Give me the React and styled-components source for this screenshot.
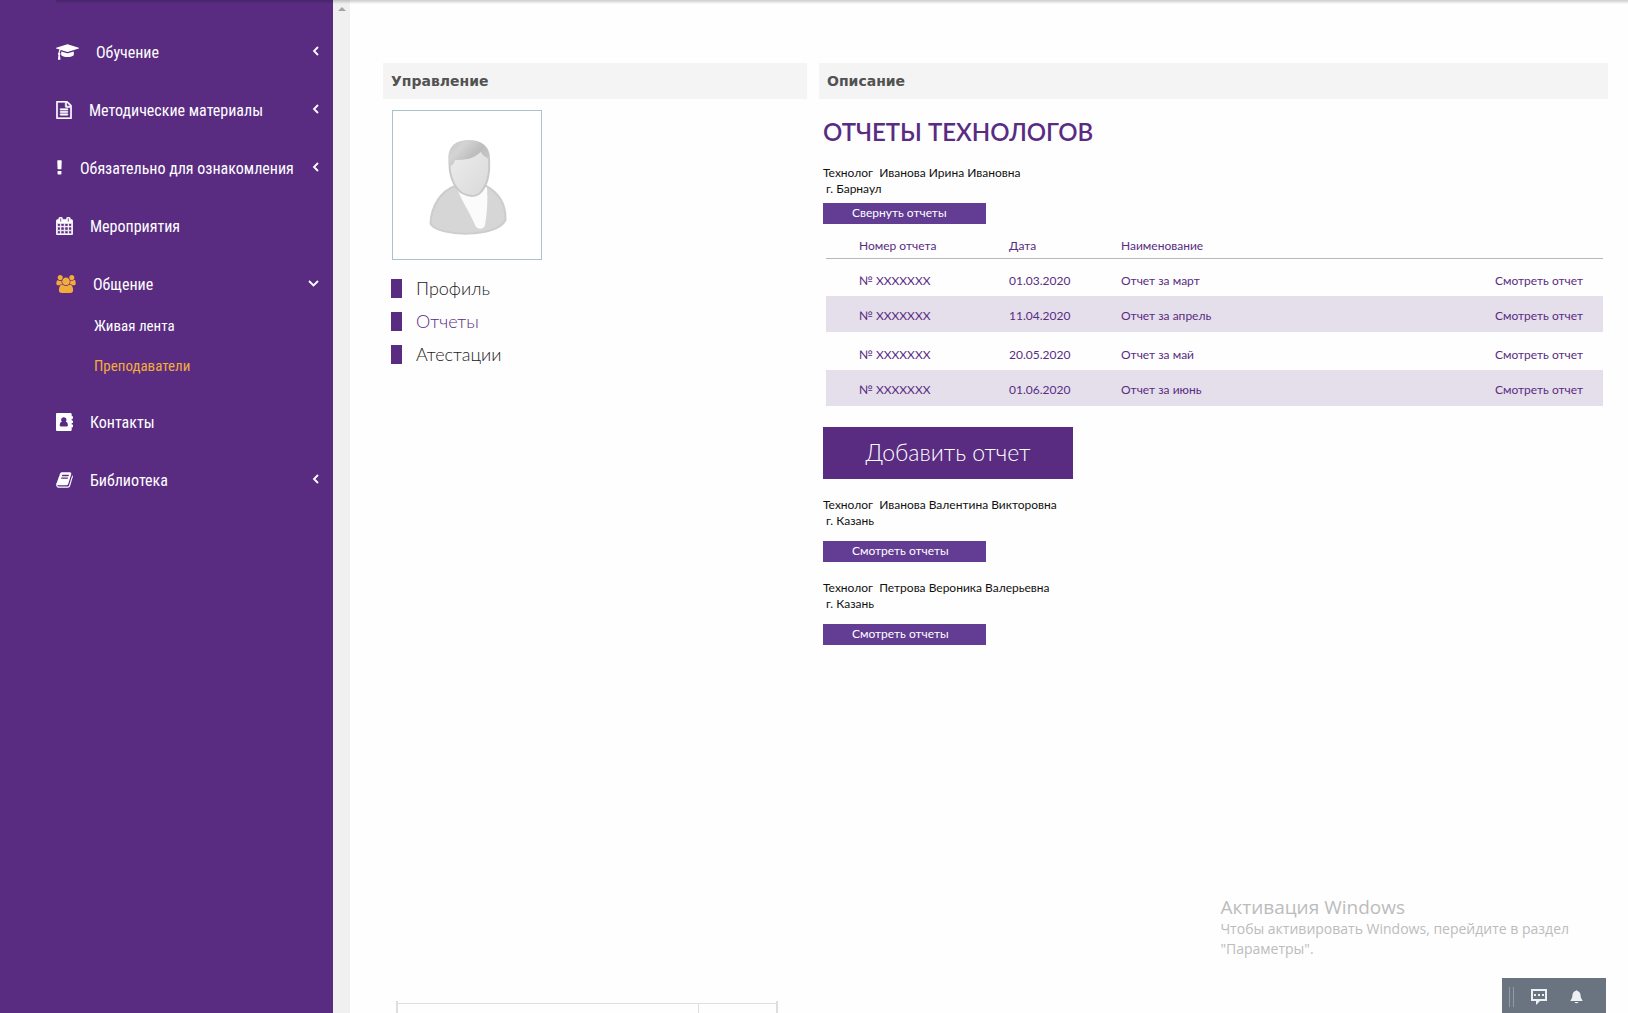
import React from "react";
import styled, { createGlobalStyle } from "styled-components";

const purple = "#592c82";
const purpleLight = "#633c94";
const amber = "#f3ac3c";
const textFont = `Lato, "Open Sans", sans-serif`;

const GlobalStyle = createGlobalStyle`
  *, *::before, *::after { box-sizing: border-box; }
  body { margin: 0; background: #fefefe; font-family: ${textFont}; }
  ul { list-style: none; margin: 0; padding: 0; }
  h1, h2, p { margin: 0; }
  a { color: inherit; text-decoration: none; }
  button { border: 0; padding: 0; margin: 0; font: inherit; color: inherit; background: none; cursor: pointer; }
`;

const Page = styled.div`
  position: relative;
  display: flex;
  min-height: 100vh;
`;

const TopShadow = styled.div`
  position: absolute;
  top: 0;
  left: 56px;
  right: 0;
  height: 4px;
  background: linear-gradient(rgba(0, 0, 0, 0.2), rgba(0, 0, 0, 0));
`;

const Sidebar = styled.nav`
  flex: 0 0 333px;
  min-width: 0;
  padding: 36px 13px 36px 56px;
  background: ${purple};
  color: #fff;
  font-family: "Roboto Condensed", "Liberation Sans Narrow", Roboto, sans-serif;
`;

const MenuList = styled.ul`
  display: flex;
  flex-direction: column;
  gap: 26px;
`;

const MenuButton = styled.button`
  display: flex;
  align-items: center;
  gap: 17px;
  width: 100%;
  height: 32px;
  font-size: 16px;
  line-height: 20px;
  text-align: left;
  white-space: nowrap;
`;

const MenuIcon = styled.svg`
  flex: none;
  height: 18px;
  fill: ${(p) => (p.$active ? amber : "#fff")};
  stroke: #fff;
  stroke-width: ${(p) => (p.$outlined ? 60 : 0)};
`;

const MenuLabel = styled.span`
  flex: 1;
  min-width: 0;
  padding-top: 2px;
`;

const Arrow = styled.svg`
  flex: none;
  fill: none;
  stroke: #fff;
  stroke-width: 1.8;
`;

const SubList = styled.ul`
  display: flex;
  flex-direction: column;
  gap: 12px;
  padding: 12px 0 0 38px;
`;

const SubLink = styled.a`
  display: block;
  font-size: 15px;
  line-height: 28px;
  color: ${(p) => (p.$active ? amber : "#fff")};
`;

const ScrollTrack = styled.div`
  flex: 0 0 17px;
  display: flex;
  justify-content: center;
  padding-top: 7px;
  background: #f0f0f0;
`;

const ScrollArrow = styled.div`
  width: 0;
  height: 0;
  border: 4px solid transparent;
  border-top: 0;
  border-bottom-color: #a3a3a3;
`;

const Main = styled.main`
  flex: 1;
  display: grid;
  grid-template-columns: 424fr 789fr;
  gap: 12px;
  padding: 63px 20px 0 33px;
`;

const Column = styled.section`
  display: flex;
  flex-direction: column;
  align-items: flex-start;
  min-width: 0;
`;

const ColumnTitle = styled.h2`
  align-self: stretch;
  padding: 0 8px;
  background: #f4f4f4;
  color: #525252;
  font: bold 14px/36px "DejaVu Sans", sans-serif;
`;

const AvatarFrame = styled.div`
  margin: 11px 0 0 9px;
  width: 150px;
  height: 150px;
  border: 1px solid #a9c2cd;
  background: #fff;
`;

const ProfileMenu = styled.ul`
  display: flex;
  flex-direction: column;
  gap: 9px;
  padding: 16px 8px;
`;

const ProfileLink = styled.a`
  display: flex;
  align-items: center;
  gap: 14px;
  font-size: 18px;
  line-height: 24px;
  font-weight: 300;
  color: ${(p) => (p.$active ? purple : "#222")};

  &::before {
    content: "";
    width: 11px;
    height: 19px;
    background: ${purple};
  }
`;

const NextTable = styled.div`
  align-self: stretch;
  display: flex;
  height: 12px;
  margin: auto 29px 0 13px;
  border: solid #dedede;
  border-width: 0 2px;
`;

const NextCell = styled.div`
  flex: ${(p) => p.$grow};
  margin-top: 2px;
  border-top: 1px solid #dedede;
  & + & { border-left: 1px solid #dedede; }
`;

const Content = styled.div`
  align-self: stretch;
  display: flex;
  flex-direction: column;
  align-items: flex-start;
  padding: 18px 5px 0 4px;
`;

const Heading = styled.h1`
  color: ${purple};
  font-size: 24px;
  line-height: 30px;
  font-weight: 600;
`;

const Person = styled.p`
  margin-top: ${(p) => p.$top}px;
  color: #111;
  font-size: 12px;
  line-height: 16px;
  white-space: pre;
`;

const ToggleButton = styled.button`
  width: 163px;
  height: 21px;
  margin-top: ${(p) => p.$top}px;
  padding: 0 0 2px 29px;
  background: ${purpleLight};
  color: #fff;
  font-size: 12px;
  line-height: 18px;
  text-align: left;
`;

const ReportTable = styled.table`
  align-self: stretch;
  margin: 8px 0 0 3px;
  border-collapse: collapse;
  table-layout: fixed;
  color: ${purple};
  font-size: 12px;
  line-height: 16px;
  text-align: left;

  th { height: 26px; padding: 2px 0 0; border-bottom: 1px solid #b9b9b9; font-weight: 400; }
  td { height: 38px; padding: 8px 0 0; }
  tbody tr:nth-child(even) { background: #e5dfeb; }
  tbody tr:nth-child(even) td { height: 36px; padding-top: 3px; }
  th:first-child, td:first-child { width: 183px; padding-left: 33px; }
  th:nth-child(2) { width: 112px; }
  td:last-child { padding-right: 20px; text-align: right; }
`;

const AddButton = styled.button`
  width: 250px;
  height: 52px;
  margin-top: 21px;
  padding-bottom: 3px;
  background: ${purple};
  color: #fff;
  font-size: 23px;
  font-weight: 300;
`;

const Activation = styled.aside`
  position: absolute;
  right: 59px;
  bottom: 54px;
  color: #bcbcbc;
  font: 14px/20px "Open Sans", "Noto Sans", sans-serif;
`;

const ActivationTitle = styled.p`
  font-size: 19px;
  line-height: 24px;
`;

const Dock = styled.div`
  position: absolute;
  right: 22px;
  bottom: 0;
  display: flex;
  align-items: center;
  width: 104px;
  height: 35px;
  padding: 3px 0 0 7px;
  background: #6a7380;
`;

const Grip = styled.span`
  width: 5px;
  height: 20px;
  margin-right: 17px;
  border: solid #949ba5;
  border-width: 0 1px;
`;

const DockButton = styled.button`
  display: flex;
  margin-right: 23px;
`;

const icons = {
  cap: {
    box: "0 0 2304 1792",
    w: 23,
    d: "M1774 836l18 316q4 69-82 128t-235 93.5-323 34.5-323-34.5-235-93.5-82-128l18-316 574 181q22 7 48 7t48-7zm530-324q0 23-22 31l-1120 352q-4 1-10 1t-10-1l-652-206q-43 34-71 111.5t-34 178.5q63 36 63 109 0 69-58 107l58 433q2 14-8 25-9 11-24 11h-192q-15 0-24-11-10-11-8-25l58-433q-58-38-58-107 0-73 65-111 11-207 98-330l-333-104q-22-8-22-31t22-31l1120-352q4-1 10-1t10 1l1120 352q22 8 22 31z",
  },
  file: {
    box: "128 0 1536 1792",
    w: 16,
    outlined: true,
    d: "M1596 380q28 28 48 76t20 88v1152q0 40-28 68t-68 28h-1344q-40 0-68-28t-28-68v-1600q0-40 28-68t68-28h896q40 0 88 20t76 48zm-444-244v376h376q-10-29-22-41l-313-313q-12-12-41-22zm384 1528v-1024h-416q-40 0-68-28t-28-68v-416h-768v1536h1280zm-1024-864q0-14 9-23t23-9h704q14 0 23 9t9 23v64q0 14-9 23t-23 9h-704q-14 0-23-9t-9-23v-64zm736 224q14 0 23 9t9 23v64q0 14-9 23t-23 9h-704q-14 0-23-9t-9-23v-64q0-14 9-23t23-9h704zm0 256q14 0 23 9t9 23v64q0 14-9 23t-23 9h-704q-14 0-23-9t-9-23v-64q0-14 9-23t23-9h704z",
  },
  mark: {
    box: "576 0 640 1792",
    w: 7,
    d: "M1088 1248v224q0 26-19 45t-45 19h-256q-26 0-45-19t-19-45v-224q0-26 19-45t45-19h256q26 0 45 19t19 45zm30-1056l-28 768q-1 26-20.5 45t-45.5 19h-256q-26 0-45.5-19t-20.5-45l-28-768q-1-26 17.5-45t44.5-19h320q26 0 44.5 19t17.5 45z",
  },
  calendar: {
    box: "64 0 1664 1792",
    w: 17,
    outlined: true,
    d: "M192 1664h288v-288h-288v288zm352 0h320v-288h-320v288zm-352-352h288v-320h-288v320zm352 0h320v-320h-320v320zm-352-384h288v-288h-288v288zm736 736h320v-288h-320v288zm-384-736h320v-288h-320v288zm768 736h288v-288h-288v288zm-384-352h320v-320h-320v320zm-352-864v-288q0-13-9.5-22.5t-22.5-9.5h-64q-13 0-22.5 9.5t-9.5 22.5v288q0 13 9.5 22.5t22.5 9.5h64q13 0 22.5-9.5t9.5-22.5zm736 864h288v-320h-288v320zm-384-384h320v-288h-320v288zm384 0h288v-288h-288v288zm32-480v-288q0-13-9.5-22.5t-22.5-9.5h-64q-13 0-22.5 9.5t-9.5 22.5v288q0 13 9.5 22.5t22.5 9.5h64q13 0 22.5-9.5t9.5-22.5zm384-64v1280q0 52-38 90t-90 38h-1408q-52 0-90-38t-38-90v-1280q0-52 38-90t90-38h128v-96q0-66 47-113t113-47h64q66 0 113 47t47 113v96h384v-96q0-66 47-113t113-47h64q66 0 113 47t47 113v96h128q52 0 90 38t38 90z",
  },
  users: {
    box: "0 0 1920 1792",
    w: 20,
    d: "M593 896q-162 5-265 128h-134q-82 0-138-40.5t-56-118.5q0-353 124-353 6 0 43.5 21t97.5 42.5 119 21.5q67 0 133-23-5 37-5 66 0 159 81 293zm1071 637q0 120-73 189.5t-194 69.5h-874q-121 0-194-69.5t-73-189.5q0-53 3.5-103.5t14-109 26.5-108.5 43-97.5 62-81 85.5-53.5 111.5-20q10 0 43 21.5t73 48 107 48 135 21.5 135-21.5 107-48 73-48 43-21.5q61 0 111.5 20t85.5 53.5 62 81 43 97.5 26.5 108.5 14 109 3.5 103.5zm-1024-1277q0 106-75 181t-181 75-181-75-75-181 75-181 181-75 181 75 75 181zm704 384q0 159-112.5 271.5t-271.5 112.5-271.5-112.5-112.5-271.5 112.5-271.5 271.5-112.5 271.5 112.5 112.5 271.5zm576 225q0 78-56 118.5t-138 40.5h-134q-103-123-265-128 81-134 81-293 0-29-5-66 66 23 133 23 59 0 119-21.5t97.5-42.5 43.5-21q124 0 124 353zm-128-609q0 106-75 181t-181 75-181-75-75-181 75-181 181-75 181 75 75 181z",
  },
  contacts: {
    box: "0 0 17 18",
    w: 17,
    d: "M1 0H14.500Q15.700 0 15.700 1.200V3.200H16.500Q17 3.200 17 3.700V5.300Q17 5.800 16.500 5.800H15.700V7.400H16.500Q17 7.400 17 7.900V9.500Q17 10 16.500 10H15.700V11.600H16.500Q17 11.600 17 12.100V13.700Q17 14.200 16.500 14.200H15.700V16.800Q15.700 18 14.500 18H1Q0 18 0 17V1Q0 0 1 0ZM7.800 4.200A2.600 2.600 0 0 0 5.900 8.700Q3.800 9 3.700 12.300Q3.800 13.600 5 13.600H10.600Q11.900 13.600 11.900 12.300Q11.800 9 9.700 8.700A2.600 2.600 0 0 0 7.800 4.200Z",
  },
  book: {
    box: "64 0 1664 1792",
    w: 17,
    d: "M1703 478q40 57 18 129l-275 906q-19 64-76.5 107.5t-122.5 43.5h-923q-77 0-148.5-53.5t-99.5-131.5q-24-67-2-127 0-4 3-27t4-37q1-8-3-21.5t-3-19.5q2-11 8-21t16.500-23.500 16.500-23.500q23-38 45-91.500t30-91.500q3-10 .5-30t-.5-28q3-11 17-28t17-23q21-36 42-92t25-90q1-9-2.500-32t.5-28q4-13 22-30.500t22-22.500q19-26 42.500-84.500t27.500-96.500q1-8-3-25.500t-2-26.500q2-8 9-18t18-23 17-21q8-12 16.500-30.500t15-35 16-36 19.500-32 26.500-23.500 36-11.500 47.500 5.500l-1 3q38-9 51-9h761q74 0 114 56t18 130l-274 906q-36 119-71.500 153.500t-128.500 34.500h-869q-27 0-38 15-11 16-1 43 24 70 144 70h923q29 0 56-15.500t35-41.500l300-987q7-22 5-57 38 15 59 43zm-1064 2q-4 13 2 22.500t20 9.500h608q13 0 25.500-9.500t16.500-22.500l21-64q4-13-2-22.500t-20-9.500h-608q-13 0-25.500 9.500t-16.500 22.500zm-83 256q-4 13 2 22.500t20 9.500h608q13 0 25.500-9.500t16.500-22.500l21-64q4-13-2-22.500t-20-9.500h-608q-13 0-25.500 9.500t-16.500 22.500z",
  },
};

const menu = [
  { label: "Обучение", icon: "cap", arrow: "left" },
  { label: "Методические материалы", icon: "file", arrow: "left" },
  { label: "Обязательно для ознакомления", icon: "mark", arrow: "left" },
  { label: "Мероприятия", icon: "calendar" },
  {
    label: "Общение",
    icon: "users",
    arrow: "down",
    active: true,
    items: [{ label: "Живая лента" }, { label: "Преподаватели", active: true }],
  },
  { label: "Контакты", icon: "contacts" },
  { label: "Библиотека", icon: "book", arrow: "left" },
];

const reports = [
  ["№ XXXXXXX", "01.03.2020", "Отчет за март"],
  ["№ XXXXXXX", "11.04.2020", "Отчет за апрель"],
  ["№ XXXXXXX", "20.05.2020", "Отчет за май"],
  ["№ XXXXXXX", "01.06.2020", "Отчет за июнь"],
];

function MenuArrow({ direction }) {
  return direction === "left" ? (
    <Arrow width="8" height="12" viewBox="0 0 8 12" aria-hidden="true">
      <path d="M6 1L2 5L6 9" />
    </Arrow>
  ) : (
    <Arrow width="12" height="12" viewBox="0 0 12 12" aria-hidden="true">
      <path d="M1 3L5.500 7.500L10 3" />
    </Arrow>
  );
}

function Avatar() {
  return (
    <svg width="148" height="148" viewBox="0 0 148 148" role="img" aria-label="Фото профиля">
      <defs>
        <linearGradient id="hair" x1="0" y1="0" x2="1" y2="0.6">
          <stop offset="0" stopColor="#c4c4c4" />
          <stop offset="0.35" stopColor="#d4d4d4" />
          <stop offset="0.7" stopColor="#bdbdbd" />
          <stop offset="1" stopColor="#c6c6c6" />
        </linearGradient>
        <linearGradient id="face" x1="0" y1="0" x2="1" y2="1">
          <stop offset="0" stopColor="#ededed" />
          <stop offset="1" stopColor="#d9d9d9" />
        </linearGradient>
      </defs>
      <path
        d="M62 75C48 80 38 95 37.500 113C46 126 104 127 112.500 109C113 93 106 82 93 75Z"
        fill="#d6d6d6"
        stroke="#cdcdcd"
        strokeWidth="2"
      />
      <path d="M64 78C70 92 77 102 82 114C84 119 91 119 92 114C94 102 95 90 94 76Z" fill="#fbfbfb" />
      <path
        d="M57 50C55 62 61 77 69 82C76 86 84 86 88 81C95 73 97 62 96 48L88 38L60 46Z"
        fill="url(#face)"
        stroke="#c9c9c9"
        strokeWidth="2"
      />
      <path
        d="M56 55C53 38 60 29 76 29C89 29 97 36 97 47C93 47 90 45 88 41C80 48 73 49 62 49C61 53 59 55 56 55Z"
        fill="url(#hair)"
      />
    </svg>
  );
}

export default function App() {
  return (
    <>
      <GlobalStyle />
      <Page>
        <Sidebar>
          <MenuList>
            {menu.map((item) => (
              <li key={item.label}>
                <MenuButton type="button">
                  <MenuIcon
                    $active={item.active}
                    $outlined={icons[item.icon].outlined}
                    width={icons[item.icon].w}
                    viewBox={icons[item.icon].box}
                    fillRule={item.icon === "contacts" ? "evenodd" : "nonzero"}
                    aria-hidden="true"
                  >
                    <path d={icons[item.icon].d} />
                  </MenuIcon>
                  <MenuLabel>{item.label}</MenuLabel>
                  {item.arrow && <MenuArrow direction={item.arrow} />}
                </MenuButton>
                {item.items && (
                  <SubList>
                    {item.items.map((sub) => (
                      <li key={sub.label}>
                        <SubLink href="#" $active={sub.active}>{sub.label}</SubLink>
                      </li>
                    ))}
                  </SubList>
                )}
              </li>
            ))}
          </MenuList>
        </Sidebar>
        <ScrollTrack>
          <ScrollArrow />
        </ScrollTrack>
        <Main>
          <Column>
            <ColumnTitle>Управление</ColumnTitle>
            <AvatarFrame>
              <Avatar />
            </AvatarFrame>
            <ProfileMenu>
              <li><ProfileLink href="#">Профиль</ProfileLink></li>
              <li><ProfileLink href="#" $active>Отчеты</ProfileLink></li>
              <li><ProfileLink href="#">Атестации</ProfileLink></li>
            </ProfileMenu>
            <NextTable>
              <NextCell $grow={301} />
              <NextCell $grow={77} />
            </NextTable>
          </Column>
          <Column>
            <ColumnTitle>Описание</ColumnTitle>
            <Content>
              <Heading>ОТЧЕТЫ ТЕХНОЛОГОВ</Heading>
              <Person $top={18}>{"Технолог  Иванова Ирина Ивановна\n г. Барнаул"}</Person>
              <ToggleButton type="button" $top={6}>Свернуть отчеты</ToggleButton>
              <ReportTable>
                <thead>
                  <tr>
                    <th scope="col">Номер отчета</th>
                    <th scope="col">Дата</th>
                    <th scope="col">Наименование</th>
                    <th aria-label="Действие" />
                  </tr>
                </thead>
                <tbody>
                  {reports.map(([number, date, name]) => (
                    <tr key={date}>
                      <td>{number}</td>
                      <td>{date}</td>
                      <td>{name}</td>
                      <td><a href="#">Смотреть отчет</a></td>
                    </tr>
                  ))}
                </tbody>
              </ReportTable>
              <AddButton type="button">Добавить отчет</AddButton>
              <Person $top={18}>{"Технолог  Иванова Валентина Викторовна\n г. Казань"}</Person>
              <ToggleButton type="button" $top={12}>Смотреть отчеты</ToggleButton>
              <Person $top={18}>{"Технолог  Петрова Вероника Валерьевна\n г. Казань"}</Person>
              <ToggleButton type="button" $top={12}>Смотреть отчеты</ToggleButton>
            </Content>
          </Column>
        </Main>
        <TopShadow />
        <Activation>
          <ActivationTitle>Активация Windows</ActivationTitle>
          <p>Чтобы активировать Windows, перейдите в раздел<br />"Параметры".</p>
        </Activation>
        <Dock>
          <Grip />
          <DockButton type="button" aria-label="Сообщения">
            <svg width="16" height="16" viewBox="0 0 16 16" aria-hidden="true">
              <path d="M0 0H16V12H9L5 16V12H0ZM2 2V10H14V2Z" fill="#eef1f4" fillRule="evenodd" />
              <path d="M3 5H5V7H3ZM7 5H9V7H7ZM11 5H13V7H11Z" fill="#eef1f4" />
            </svg>
          </DockButton>
          <DockButton type="button" aria-label="Уведомления">
            <svg width="13" height="14" viewBox="0 0 13 14" aria-hidden="true">
              <path d="M5.500 1Q6.500-0.600 7.500 1Q10.300 1.800 10.500 5Q10.600 8.500 12.500 10.500V11H0.500V10.500Q2.400 8.500 2.500 5Q2.700 1.800 5.500 1ZM4.500 12H8.500Q8 13.200 6.500 13.200T4.500 12Z" fill="#eef1f4" />
            </svg>
          </DockButton>
        </Dock>
      </Page>
    </>
  );
}
